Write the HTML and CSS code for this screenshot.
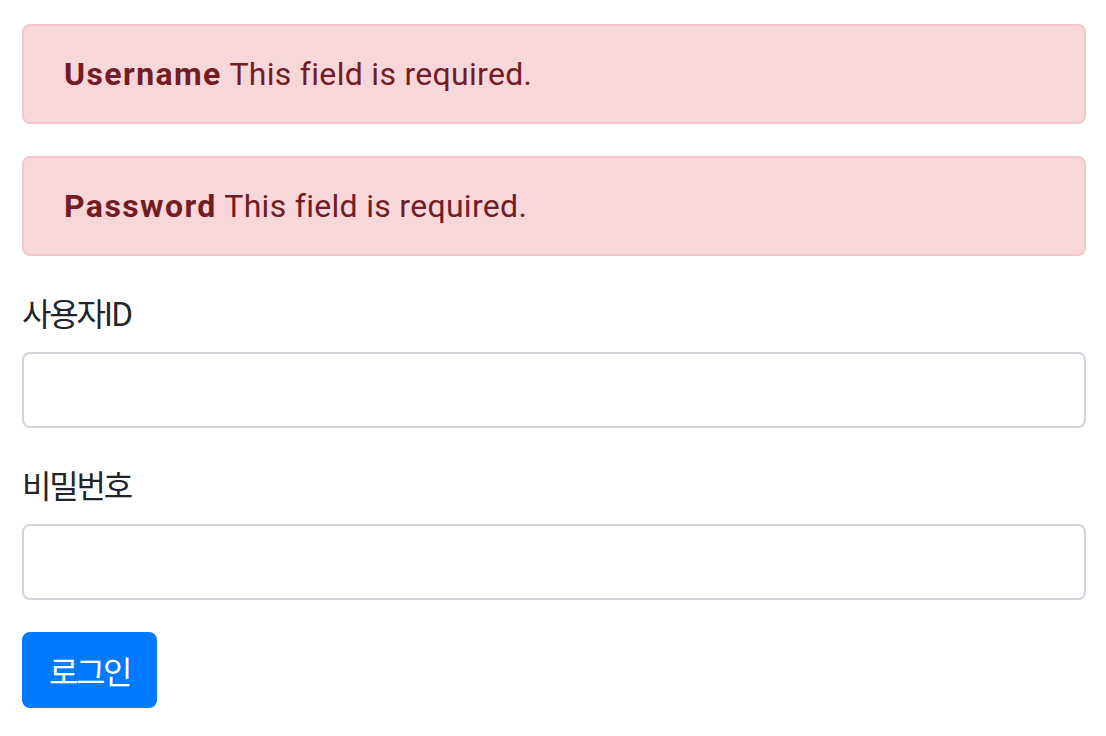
FILE: index.html
```html
<!DOCTYPE html>
<html lang="ko">
<head>
<meta charset="utf-8">
<title>로그인</title>
<link rel="stylesheet" href="styles.css">
</head>
<body>
<div class="container">
  <div class="alert"><strong>Username</strong> This field is required.</div>
  <div class="alert"><strong>Password</strong> This field is required.</div>
  <form class="form">
    <div class="form-group">
      <label class="label" for="username">사용자ID</label>
      <input class="input" id="username" type="text">
    </div>
    <div class="form-group">
      <label class="label" for="password">비밀번호</label>
      <input class="input" id="password" type="password">
    </div>
    <button class="btn" type="submit">로그인</button>
  </form>
</div>
</body>
</html>
```
FILE: styles.css
```css
html, body {
  margin: 0;
  padding: 0;
  background: #fff;
}
body {
  font-family: Roboto, "Noto Sans CJK KR", sans-serif;
  font-size: 32px;
  line-height: 48px;
  color: #212529;
}
.container {
  padding: 24px 20px 0 22px;
}
.alert {
  background: #f8d7da;
  border: 2px solid #f5c6cb;
  color: #721c24;
  border-radius: 8px;
  padding: 24px 40px;
  margin-bottom: 32px;
  font-size: 32px;
  letter-spacing: 0.3px;
}
.alert strong {
  font-weight: 700;
  letter-spacing: 1.4px;
}
.form {
  margin: 0;
}
.form-group {
  display: flex;
  flex-direction: column;
  margin-bottom: 32px;
}
.label {
  display: block;
  margin-bottom: 16px;
  font-family: "Noto Sans CJK KR", sans-serif;
  font-size: 32px;
  letter-spacing: -2.2px;
  color: #212529;
}
.input {
  display: block;
  box-sizing: border-box;
  width: 100%;
  height: 76px;
  border: 2px solid #ced4da;
  border-radius: 8px;
  background: #fff;
  padding: 12px 24px;
  font-size: 32px;
  margin: 0;
}
.btn {
  box-sizing: border-box;
  height: 76px;
  padding: 12px 25px;
  border: 2px solid #007bff;
  background: #007bff;
  color: #fff;
  border-radius: 8px;
  font-family: "Noto Sans CJK KR", sans-serif;
  font-size: 32px;
  line-height: 48px;
  letter-spacing: -2.5px;
}
```
